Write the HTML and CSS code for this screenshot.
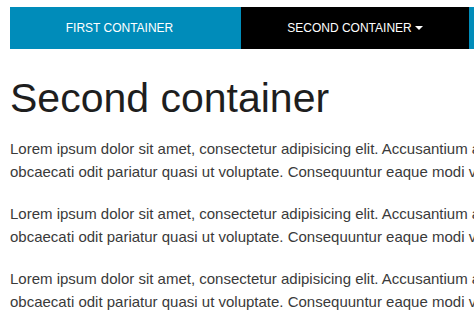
FILE: index.html
```html
<!DOCTYPE html>
<html lang="en">
<head>
<meta charset="utf-8">
<title>Second container</title>
<link rel="stylesheet" href="styles.css">
</head>
<body>
<nav class="tabs">
  <a class="tab tab-first" href="#">FIRST CONTAINER</a>
  <a class="tab tab-active" href="#">SECOND CONTAINER<span class="caret"></span></a>
  <a class="tab tab-third" href="#" aria-label="Third container"></a>
</nav>
<main class="content">
  <h1 class="title">Second container</h1>
  <p class="text">Lorem ipsum dolor sit amet, consectetur adipisicing elit. Accusantium aliquam obcaecati odit pariatur quasi ut voluptate. Consequuntur eaque modi vel.</p>
  <p class="text">Lorem ipsum dolor sit amet, consectetur adipisicing elit. Accusantium aliquam obcaecati odit pariatur quasi ut voluptate. Consequuntur eaque modi vel.</p>
  <p class="text">Lorem ipsum dolor sit amet, consectetur adipisicing elit. Accusantium aliquam obcaecati odit pariatur quasi ut voluptate. Consequuntur eaque modi vel.</p>
</main>
</body>
</html>
```
FILE: styles.css
```css
html, body {
  margin: 0;
  padding: 0;
  background: #fff;
  overflow: hidden;
}
body {
  font-family: "Liberation Sans", Arial, sans-serif;
  padding: 7px 0 0 10px;
}
.tabs {
  display: flex;
  height: 42px;
  width: 700px;
}
.tab {
  display: flex;
  align-items: center;
  justify-content: center;
  flex: none;
  color: #fff;
  text-decoration: none;
  font-size: 12px;
  white-space: nowrap;
}
.tab-first {
  width: 231px;
  background: #008cba;
  box-sizing: border-box;
  padding-right: 12px;
}
.tab-active {
  width: 228px;
  background: #000;
}
.tab-third {
  width: 231px;
  background: #008cba;
}
.caret {
  display: inline-block;
  width: 0;
  height: 0;
  margin-left: 3px;
  border-top: 4px solid #fff;
  border-left: 4px solid transparent;
  border-right: 4px solid transparent;
}
.content {
  width: 560px;
}
.title {
  margin: 27px 0 17px 0;
  font-size: 41px;
  line-height: 45px;
  font-weight: normal;
  color: #1e1e1e;
}
.text {
  margin: 0 0 20px 0;
  width: 540px;
  font-size: 15px;
  line-height: 22.5px;
  color: #3a3a3a;
}
```
